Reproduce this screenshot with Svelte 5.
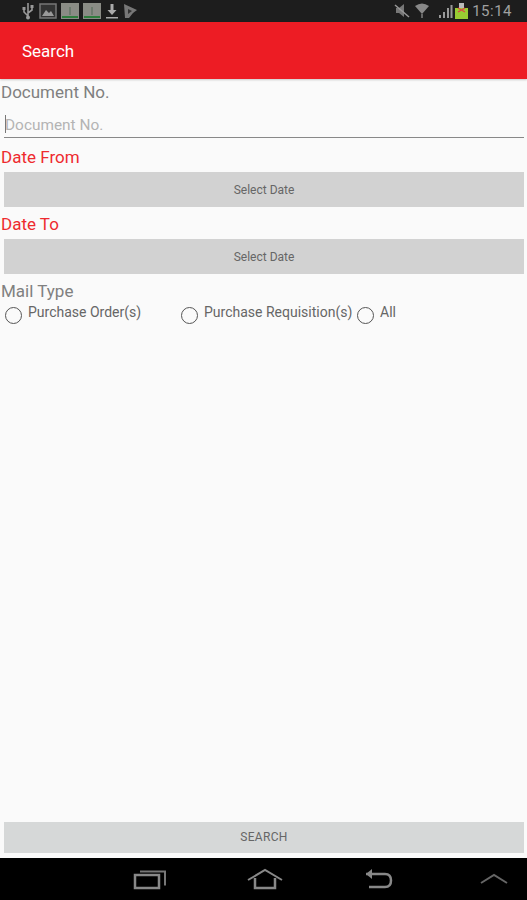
<script>
    const radios = ['Purchase Order(s)', 'Purchase Requisition(s)', 'All'];
</script>

<div class="screen">
    <!-- Status bar -->
    <div class="status-bar">
        <div class="status-left">
            <svg width="14" height="18" viewBox="0 0 14 18"><path d="M7 1v15M7 14L3 10V7M7 11l4-3V5" fill="none" stroke="#999" stroke-width="1.600"/><rect x="1.500" y="5" width="3" height="3" fill="#999"/><rect x="9.500" y="3" width="3" height="3" fill="#999"/><circle cx="7" cy="15.500" r="2" fill="#999"/></svg>
            <svg width="18" height="18" viewBox="0 0 18 18"><rect x="1" y="2" width="16" height="14" fill="#333" stroke="#777" stroke-width="1.500"/><path d="M3 14l4-6 3 3 2-2 3 5z" fill="#999"/></svg>
            <svg width="18" height="18" viewBox="0 0 18 18"><rect x="0" y="1" width="18" height="16" fill="#8a8c85"/><rect x="8" y="5" width="2" height="8" fill="#6d7a6d"/><rect x="1" y="14" width="16" height="2" fill="#2f7d3d"/></svg>
            <svg width="18" height="18" viewBox="0 0 18 18"><rect x="0" y="1" width="18" height="16" fill="#8a8c85"/><rect x="8" y="5" width="2" height="8" fill="#6d7a6d"/><rect x="1" y="14" width="16" height="2" fill="#2f7d3d"/></svg>
            <svg width="14" height="18" viewBox="0 0 14 18"><path d="M5.500 2h3v6h3L7 13 2.500 8h3z" fill="#aaa"/><rect x="1" y="15" width="12" height="1.500" fill="#aaa"/></svg>
            <svg width="15" height="18" viewBox="0 0 15 18"><path d="M1 2l13 6-4 3-4 5H2z" fill="#777"/><path d="M5 7l4 2-4 3z" fill="#333"/></svg>
        </div>
        <div class="status-right">
            <svg width="16" height="16" viewBox="0 0 16 16"><path d="M2 5h3l5-4v13l-5-4H2z" fill="#777"/><path d="M1 2l14 12" stroke="#999" stroke-width="1.500"/></svg>
            <svg width="16" height="18" viewBox="0 0 16 18"><path d="M1 4q7-5 14 0L8 12z" fill="#888"/><rect x="7" y="12" width="2" height="4" fill="#666"/></svg>
            <svg class="signal" width="15" height="14" viewBox="0 0 15 14"><path d="M1 14h2v-3H1zM5 14h2V8H5zM9 14h2V4H9zM12.500 14h2V1h-2z" fill="#999"/></svg>
            <svg width="13" height="16" viewBox="0 0 13 16"><rect x="0" y="5" width="13" height="11" fill="#9c3"/><rect x="4" y="0" width="5" height="5" fill="#bbb"/><path d="M3 5l7 4M10 5l-7 4" stroke="#d44" stroke-width="1.200"/></svg>
            <span class="clock">15:14</span>
        </div>
    </div>

    <!-- App bar -->
    <header class="app-bar">Search</header>

    <!-- Form -->
    <main class="form">
        <div class="label doc">Document No.</div>
        <div class="input-row">
            <span class="cursor"></span>
            <input type="text" placeholder="Document No." />
        </div>

        <div class="label red first-date">Date From</div>
        <button class="btn date-btn">Select Date</button>

        <div class="label red second-date">Date To</div>
        <button class="btn date-btn">Select Date</button>

        <div class="label mail">Mail Type</div>
        <div class="radio-row">
            {#each radios as r}
                <div class="radio-item">
                    <span class="radio"></span>
                    <span class="radio-text">{r}</span>
                </div>
            {/each}
        </div>

        <button class="btn search-btn">SEARCH</button>
    </main>

    <!-- Nav bar -->
    <nav class="nav-bar">
        <svg width="34" height="22" viewBox="0 0 34 22"><path d="M7 3.500h25v14" fill="none" stroke="#777" stroke-width="2"/><rect x="2" y="7" width="24" height="13" fill="#000" stroke="#888" stroke-width="2.500"/></svg>
        <svg width="36" height="22" viewBox="0 0 36 22"><path d="M1 12L18 2l17 10" fill="none" stroke="#888" stroke-width="2"/><path d="M8 10v10h20V10" fill="none" stroke="#888" stroke-width="2.500"/></svg>
        <svg width="30" height="22" viewBox="0 0 30 22"><path d="M3 6h19q6 0 6 6.500T22 19H6" fill="none" stroke="#888" stroke-width="2.500"/><path d="M9 1L3 6l6 5z" fill="#888"/></svg>
        <svg class="up" width="28" height="14" viewBox="0 0 28 14"><path d="M1 11L14 3l13 8" fill="none" stroke="#666" stroke-width="2"/></svg>
    </nav>
</div>

<style>
    :global(body) {
        margin: 0;
        background: #fafafa;
        font-family: Roboto, "Liberation Sans", sans-serif;
    }

    .screen {
        width: 527px;
        height: 900px;
        display: flex;
        flex-direction: column;
        overflow: hidden;
        background: #fafafa;
    }

    .status-bar {
        height: 22px;
        background: #1d1d1d;
        display: flex;
        justify-content: space-between;
        align-items: center;
        padding: 0 15px 0 21px;
        flex-shrink: 0;
    }

    .status-left, .status-right {
        display: flex;
        align-items: center;
    }

    .status-left {
        gap: 4px;
    }

    .status-right {
        gap: 4px;
    }

    .signal {
        margin: 0 -2px 0 4px;
    }

    .clock {
        color: #a0a0a0;
        font-size: 15px;
        letter-spacing: 0.5px;
    }

    .app-bar {
        height: 57px;
        background: #ed1c24;
        color: #fff;
        font-size: 17px;
        display: flex;
        align-items: center;
        padding: 1px 0 0 22px;
        box-sizing: border-box;
        flex-shrink: 0;
        box-shadow: 0 1px 2px rgba(0, 0, 0, 0.2);
    }

    .form {
        flex: 1;
        display: flex;
        flex-direction: column;
        padding-bottom: 5px;
    }

    .label {
        font-size: 17px;
        line-height: 20px;
        color: #808080;
        padding-left: 1px;
    }

    .doc {
        margin-top: 3px;
    }

    .red {
        color: #ee2a2f;
    }

    .input-row {
        position: relative;
        margin: 5px 3px 0 4px;
        height: 30px;
        border-bottom: 1.500px solid #888;
    }

    .cursor {
        position: absolute;
        left: 1px;
        top: 8px;
        width: 1px;
        height: 18px;
        background: #777;
    }

    input {
        width: 100%;
        height: 100%;
        box-sizing: border-box;
        border: none;
        outline: none;
        background: transparent;
        padding: 6px 0 0 1px;
        font-family: inherit;
        font-size: 15.400px;
    }

    input::placeholder {
        color: #b4b4b4;
        opacity: 1;
    }

    .first-date {
        margin-top: 9px;
    }

    .second-date {
        margin-top: 7px;
    }

    .mail {
        margin-top: 7px;
    }

    .btn {
        border: none;
        background: #d2d2d2;
        color: #666;
        font-family: inherit;
        font-size: 12px;
        margin: 0 3px 0 4px;
        padding: 0;
        display: block;
        width: 520px;
    }

    .date-btn {
        height: 35px;
        margin-top: 5px;
    }

    .radio-row {
        display: flex;
        margin-top: 1px;
        padding-left: 5px;
    }

    .radio-item {
        width: 176px;
        flex-shrink: 0;
        display: flex;
        align-items: flex-start;
    }

    .radio {
        width: 15px;
        height: 15px;
        border: 1.500px solid #555;
        border-radius: 50%;
        margin-top: 5px;
        flex-shrink: 0;
    }

    .radio-text {
        font-size: 14px;
        line-height: 17px;
        color: #666;
        margin: 2px 0 0 6px;
        white-space: nowrap;
    }

    .search-btn {
        height: 31px;
        margin-top: auto;
        padding-bottom: 2px;
        background: #d6d8d8;
        letter-spacing: 0.3px;
    }

    .nav-bar {
        height: 42px;
        background: #000;
        flex-shrink: 0;
        display: flex;
        align-items: center;
        padding-left: 133px;
        gap: 80px;
    }

    .up {
        margin-left: 7px;
    }
</style>
